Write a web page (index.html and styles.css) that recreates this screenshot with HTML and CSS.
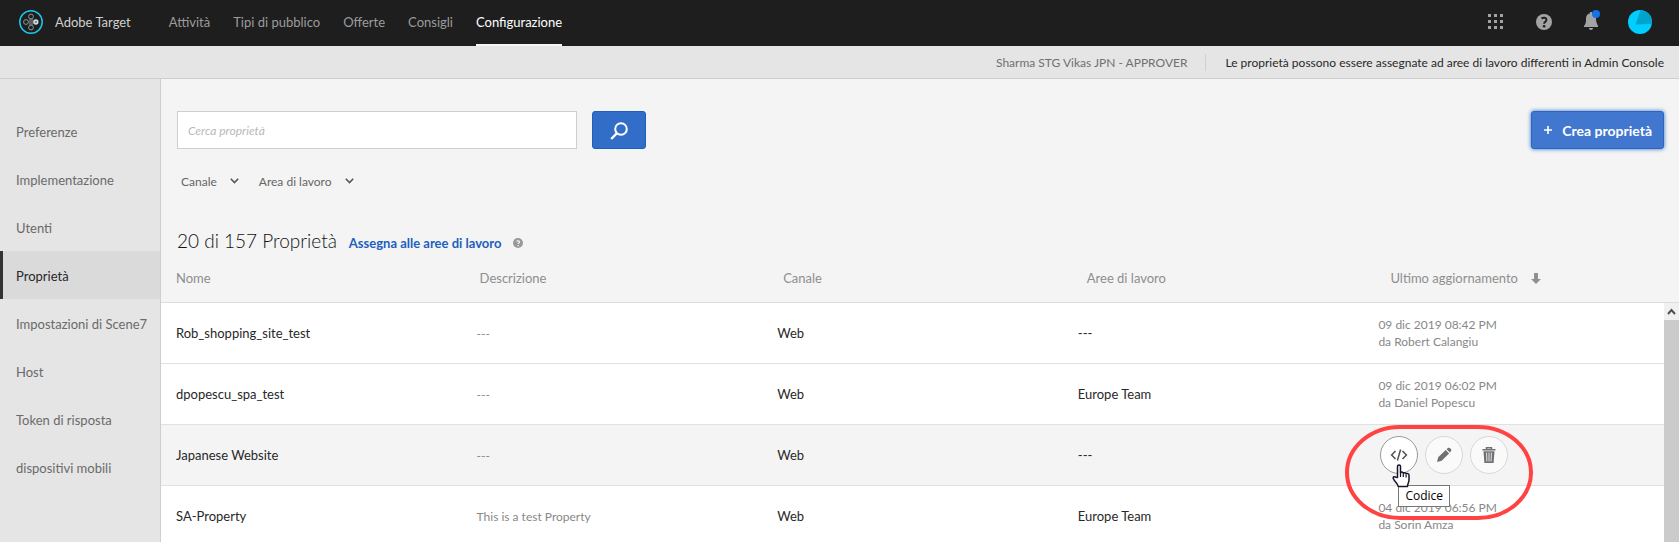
FILE: index.html
```html
<!DOCTYPE html>
<html lang="it">
<head>
<meta charset="utf-8">
<title>Adobe Target - Proprietà</title>
<meta name="viewport" content="width=device-width, initial-scale=1">
<link rel="stylesheet" href="styles.css">
</head>
<body>
<header class="topbar">
  <svg class="logo" width="24" height="24" viewBox="0 0 24 24" fill="none" aria-hidden="true">
    <circle cx="12" cy="12" r="11.2" stroke="#1bc8ea" stroke-width="1.5"/>
    <g stroke="#8d979c">
      <circle cx="12" cy="6.5" r="2.4"/><circle cx="12" cy="17.5" r="2.4"/><circle cx="7" cy="12" r="2.4"/>
      <path d="M11 9v6M13 9v6"/>
    </g>
    <circle cx="16.800" cy="12" r="2.700" fill="#c9dbe4"/>
    <path d="M15.800 12h2M16.800 11v2" stroke="#5f747f"/>
  </svg>
  <span class="brand">Adobe Target</span>
  <nav class="mainnav" aria-label="Principale">
    <a href="#">Attività</a>
    <a href="#">Tipi di pubblico</a>
    <a href="#">Offerte</a>
    <a href="#">Consigli</a>
    <a href="#" class="current" aria-current="page">Configurazione</a>
  </nav>
  <div class="tools">
    <button class="tool" aria-label="App">
      <svg width="24" height="24" viewBox="0 0 24 24" fill="#a3a3a3"><path d="M4 4h3v3H4zM10 4h3v3h-3zM16 4h3v3h-3zM4 10h3v3H4zM10 10h3v3h-3zM16 10h3v3h-3zM4 16h3v3H4zM10 16h3v3h-3zM16 16h3v3h-3z"/></svg>
    </button>
    <button class="tool" aria-label="Aiuto">
      <svg width="24" height="24" viewBox="0 0 24 24"><circle cx="12" cy="12" r="8" fill="#a3a3a3"/><path d="M9.500 8.600c1.800-1.500 5-1.100 5 1.200 0 1.900-2.400 1.900-2.400 4" fill="none" stroke="#1e1e1e" stroke-width="1.900"/><circle cx="12.100" cy="16.300" r="1.300" fill="#1e1e1e"/></svg>
    </button>
    <button class="tool" aria-label="Notifiche">
      <svg width="24" height="24" viewBox="0 0 24 24"><path d="M10 2h2v1.200c2.900.6 4 2.700 4 5.300 0 4 1 5 2 7.500v1H4v-1c2-2.500 2-4 2-7.500 0-2.600 1.100-4.700 4-5.300zM9 18h4c0 1.300-.8 2-2 2s-2-.7-2-2z" fill="#a3a3a3"/><circle cx="16" cy="4" r="4" fill="#1473e6"/></svg>
    </button>
    <button class="tool" aria-label="Profilo">
      <svg width="24" height="24" viewBox="0 0 24 24"><circle cx="12" cy="12" r="12" fill="#00ceff"/><path d="M12.500 0A12 12 0 0 1 23.800 14L7.500 14.500z" fill="#00a3cc"/></svg>
    </button>
  </div>
</header>
<div class="subbar">
  <span class="tenant">Sharma STG Vikas JPN - APPROVER</span>
  <span class="notice">Le proprietà possono essere assegnate ad aree di lavoro differenti in Admin Console</span>
</div>
<div class="shell">
  <nav class="sidebar" aria-label="Configurazione">
    <a href="#">Preferenze</a>
    <a href="#">Implementazione</a>
    <a href="#">Utenti</a>
    <a href="#" class="active" aria-current="page">Proprietà</a>
    <a href="#">Impostazioni di Scene7</a>
    <a href="#">Host</a>
    <a href="#">Token di risposta</a>
    <a href="#">dispositivi mobili</a>
  </nav>
  <main class="content">
    <div class="searchrow">
      <input class="search" type="text" placeholder="Cerca proprietà" aria-label="Cerca proprietà">
      <button class="btn search-btn" aria-label="Cerca">
        <svg width="20" height="20" viewBox="0 0 20 20" fill="none" stroke="#fff" stroke-width="2"><circle cx="12" cy="9" r="5.800"/><path d="M8 13.200L2.200 19" stroke-width="2.400"/></svg>
      </button>
      <button class="btn create-btn"><svg width="8" height="8" viewBox="0 0 8 8" stroke="#fff" stroke-width="1.600" aria-hidden="true"><path d="M4 0v8M0 4h8"/></svg>Crea proprietà</button>
    </div>
    <div class="filters">
      <button class="filter">Canale<svg width="9" height="6" viewBox="0 0 9 6" fill="none" stroke="#555" stroke-width="1.600" aria-hidden="true"><path d="M.8.8l3.700 3.700L8.200.8"/></svg></button>
      <button class="filter">Area di lavoro<svg width="9" height="6" viewBox="0 0 9 6" fill="none" stroke="#555" stroke-width="1.600" aria-hidden="true"><path d="M.8.8l3.700 3.700L8.200.8"/></svg></button>
    </div>
    <div class="titlerow">
      <h1>20 di 157 Proprietà</h1>
      <a href="#">Assegna alle aree di lavoro</a>
      <svg width="10" height="10" viewBox="0 0 10 10" role="img" aria-label="Aiuto"><circle cx="5" cy="5" r="5" fill="#999"/><path d="M3.600 3.400c.8-1 2.900-.7 2.900.6 0 1-1.400 1-1.400 2.100" fill="none" stroke="#f4f4f4" stroke-width="1.200"/><path d="M4.500 7h1.200v1.200H4.500z" fill="#f4f4f4"/></svg>
    </div>
    <div class="tablewrap">
      <table>
        <thead>
          <tr>
            <th scope="col">Nome</th>
            <th scope="col">Descrizione</th>
            <th scope="col">Canale</th>
            <th scope="col">Aree di lavoro</th>
            <th scope="col">Ultimo aggiornamento<svg width="10" height="11" viewBox="0 0 10 11" aria-hidden="true"><path d="M3 0h4v6h3L5 11 0 6h3z" fill="#909090"/></svg></th>
          </tr>
        </thead>
        <tbody>
          <tr>
            <td>Rob_shopping_site_test</td><td class="muted">---</td><td>Web</td><td>---</td>
            <td class="date">09 dic 2019 08:42 PM<br>da Robert Calangiu</td>
          </tr>
          <tr>
            <td>dpopescu_spa_test</td><td class="muted">---</td><td>Web</td><td>Europe Team</td>
            <td class="date">09 dic 2019 06:02 PM<br>da Daniel Popescu</td>
          </tr>
          <tr class="hovered">
            <td>Japanese Website</td><td class="muted">---</td><td>Web</td><td>---</td>
            <td class="actions">
              <button class="round focus" aria-label="Codice" aria-describedby="tip"><svg width="18" height="12" viewBox="0 0 18 12" fill="none" stroke="#505050" stroke-width="1.500"><path d="M5.500 2L1.600 6l3.900 4M12.500 2l3.900 4-3.900 4M10.600.5l-3.200 11"/></svg></button>
              <button class="round" aria-label="Modifica"><svg width="16" height="16" viewBox="0 0 16 16" fill="#707070"><path d="M1 15l1.200-4.800 7.500-7.100 3.400 3.400-7.500 7.200zM10.600 2.300l1.300-1.200c1.500-1.200 4.200 1.400 3.200 3l-1.200 1.500z"/></svg></button>
              <button class="round" aria-label="Elimina"><svg width="14" height="16" viewBox="0 0 14 16"><path d="M4.500 2V.7h5V2M.5 2.700h13" fill="none" stroke="#707070" stroke-width="1.500"/><path d="M1.500 4.300h11L11.600 16H2.400z" fill="#707070"/><path d="M4.600 5.500l.3 9M7 5.500v9M9.400 5.500l-.3 9" stroke="#dfe6ef" stroke-width="1"/></svg></button>
              <span class="tooltip" id="tip" role="tooltip">Codice</span>
              <svg class="cursor" width="19" height="24" viewBox="0 0 19 24" aria-hidden="true"><path d="M5.500 13.500V2.500c0-2 3-2 3 0V9c.4-1.500 2.700-1.200 2.800.4.600-1.200 2.700-.8 2.800.7.700-1 2.900-.6 2.900 1.200V16c0 2.500-1.500 3.500-1.500 6.500H6.200c0-2.500-3.500-4.500-4.900-8-.7-1.700 1.500-2.400 2.500-1.200z" fill="#fff" stroke="#15152a" stroke-width="1.500" stroke-linejoin="round"/><path d="M8.500 9v4M11.300 10v3M14.100 11v2.500" stroke="#15152a" stroke-width="1.200"/></svg>
              <svg class="ring" width="188" height="95" viewBox="0 0 188 95" aria-hidden="true"><rect x="2" y="2" width="184" height="91" rx="53" ry="45.500" fill="none" stroke="#ff4343" stroke-width="4"/></svg>
            </td>
          </tr>
          <tr>
            <td>SA-Property</td><td class="muted">This is a test Property</td><td>Web</td><td>Europe Team</td>
            <td class="date">04 dic 2019 06:56 PM<br>da Sorin Amza</td>
          </tr>
        </tbody>
      </table>
      <div class="scrollbar" aria-hidden="true"><svg width="15" height="17" viewBox="0 0 15 17" fill="none" stroke="#505050" stroke-width="2"><path d="M4 11l3.500-4L11 11"/></svg></div>
    </div>
  </main>
</div>
</body>
</html>
```
FILE: styles.css
```css
* { box-sizing: border-box; }
body {
  margin: 0;
  height: 100vh;
  display: flex;
  flex-direction: column;
  overflow: hidden;
  background: #f4f4f4;
  color: #282828;
  font-family: Lato, "Open Sans", sans-serif;
  font-size: 13px;
  line-height: 17px;
}
a { color: inherit; text-decoration: none; }
button { font: inherit; color: inherit; border: 0; padding: 0; background: none; cursor: pointer; }
svg { display: block; flex: none; }

.topbar {
  flex: none;
  display: flex;
  align-items: center;
  height: 46px;
  padding: 0 27px 2px 19px;
  background: #1e1e1e;
  color: #9c9c9c;
}
.brand { margin-left: 12px; color: #d0d0d0; }
.mainnav { display: flex; align-self: flex-start; gap: 23px; margin-left: 38px; }
.mainnav a { display: flex; align-items: center; height: 46px; border-bottom: 2px solid transparent; }
.mainnav .current { color: #fff; border-bottom-color: #f4f4f4; }
.tools { display: flex; gap: 24px; margin-left: auto; }
.tool { width: 24px; height: 24px; }

.subbar {
  flex: none;
  display: flex;
  justify-content: flex-end;
  align-items: center;
  height: 33px;
  padding-right: 15px;
  background: #e5e5e5;
  border-bottom: 1px solid #cecece;
  font-size: 12px;
}
.tenant { padding-right: 18px; color: #707070; }
.notice { padding-left: 19px; border-left: 1px solid #d0d0d0; }

.shell { flex: 1; display: flex; min-height: 0; }
.sidebar {
  flex: none;
  width: 161px;
  padding-top: 28px;
  background: #e5e5e5;
  border-right: 1px solid #cecece;
  color: #6a6a6a;
}
.sidebar a { display: flex; align-items: center; height: 48px; padding: 2px 0 0 16px; white-space: nowrap; }
.sidebar .active { padding-left: 13px; border-left: 3px solid #323232; background: #dadada; color: #282828; }

.content { flex: 1; min-width: 0; display: flex; flex-direction: column; padding-top: 32px; }
.searchrow { display: flex; align-items: center; padding: 0 15px 0 16px; }
.search {
  width: 400px;
  height: 38px;
  padding: 0 10px;
  border: 1px solid #cecece;
  background: #fff;
  font: italic 12px Lato, "Open Sans", sans-serif;
}
.search::placeholder { color: #b8b8b8; opacity: 1; }
.btn { display: flex; align-items: center; justify-content: center; height: 38px; border: 1px solid #1c5fbe; border-radius: 3px; background: #326ec8; color: #fff; }
.search-btn { width: 54px; margin-left: 15px; }
.create-btn { gap: 10px; margin-left: auto; padding: 0 11px 0 12px; background: #4177cf; border-color: #2b66c2; box-shadow: 0 0 4px #326ec8; font-size: 14px; font-weight: 700; }
.filters { display: flex; gap: 20px; padding: 22px 20px 0; }
.filter { display: flex; align-items: center; gap: 13px; height: 20px; color: #666; font-size: 12px; }
.titlerow { display: flex; align-items: baseline; gap: 12px; padding: 37px 16px 0; }
h1 { margin: 0; color: #111; font-size: 19px; font-weight: 300; line-height: 26px; }
.titlerow a { color: #1c5fbe; font-weight: 700; }

.tablewrap { flex: 1; position: relative; min-height: 0; margin-top: 1px; }
table, thead, tbody { display: block; }
tr { display: grid; grid-template-columns: repeat(5, 1fr); }
th { display: flex; align-items: center; gap: 13px; height: 47px; padding: 0 15px; color: #8e8e8e; font-weight: 400; text-align: left; }
thead { border-bottom: 1px solid #dcdcdc; }
tbody { padding-right: 15px; background: #fff; }
tbody tr { height: 61px; border-bottom: 1px solid #e1e1e1; }
td { display: flex; align-items: center; padding: 0 15px; }
.muted, .date { color: #888; font-size: 12px; }
.date { display: block; padding-top: 13px; }
.hovered { background: #f4f4f4; }
.actions { position: relative; gap: 7px; padding-left: 17px; }
.round { display: flex; align-items: center; justify-content: center; width: 38px; height: 38px; border: 1px solid #d8d8d8; border-radius: 50%; background: #fafafa; }
.round.focus { border-color: #999; background: #fff; }
.tooltip { position: absolute; z-index: 2; left: 35px; top: 60px; padding: 1px 6px; border: 1px solid #767676; background: #fff; color: #000; font: 12px/18px "Open Sans", sans-serif; }
.cursor { position: absolute; z-index: 4; left: 29px; top: 39px; }
.ring { position: absolute; z-index: 3; left: -18px; top: 0; }
.scrollbar { position: absolute; top: 48px; right: 0; bottom: 0; width: 15px; background: #cbcbcb; }
.scrollbar svg { background: #f0f0f0; }
```
